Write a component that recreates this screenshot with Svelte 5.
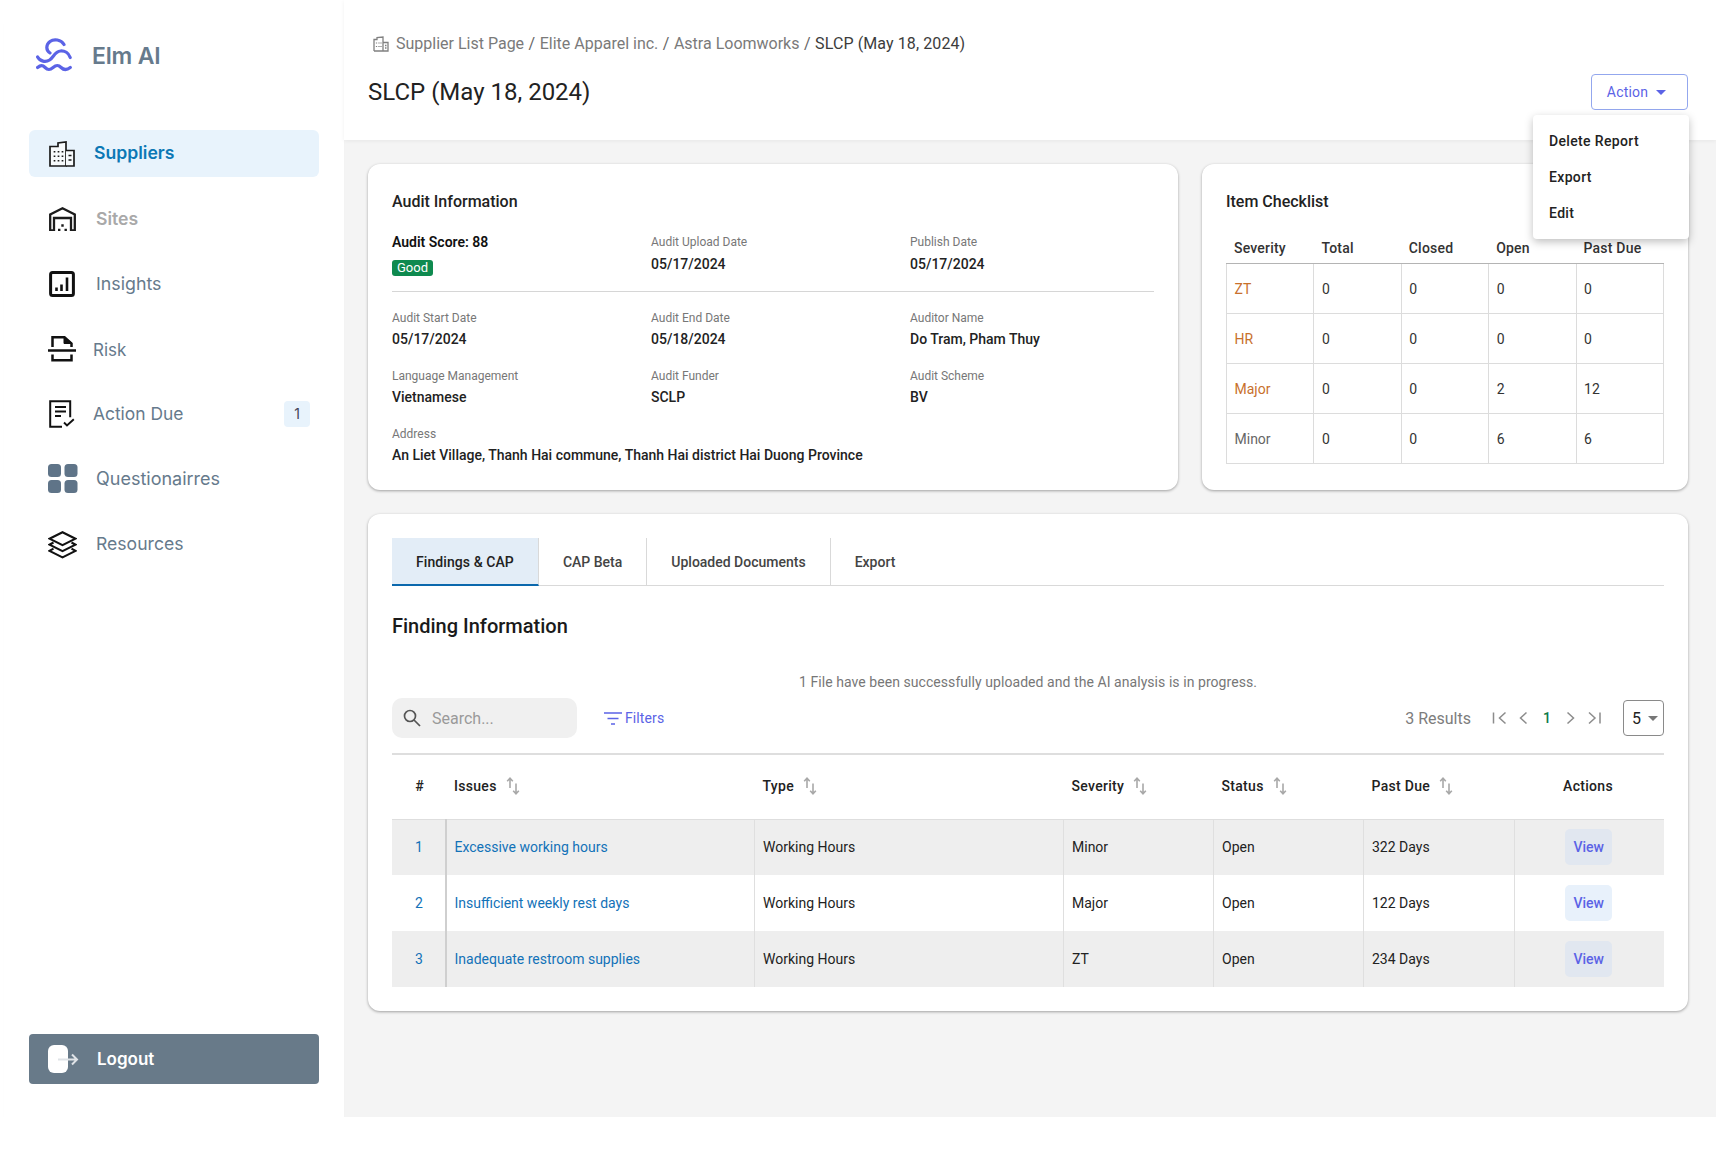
<script>
  const nav = [
    { key: 'suppliers', label: 'Suppliers', active: true },
    { key: 'sites', label: 'Sites', muted: true },
    { key: 'insights', label: 'Insights' },
    { key: 'risk', label: 'Risk' },
    { key: 'due', label: 'Action Due', badge: '1' },
    { key: 'quest', label: 'Questionairres' },
    { key: 'res', label: 'Resources' }
  ];
  const topInfo = [
    { l: 'Audit Upload Date', v: '05/17/2024' },
    { l: 'Publish Date', v: '05/17/2024' }
  ];
  const info = [
    { l: 'Audit Start Date', v: '05/17/2024' },
    { l: 'Audit End Date', v: '05/18/2024' },
    { l: 'Auditor Name', v: 'Do Tram, Pham Thuy' },
    { l: 'Language Management', v: 'Vietnamese' },
    { l: 'Audit Funder', v: 'SCLP' },
    { l: 'Audit Scheme', v: 'BV' }
  ];
  const check = [
    ['ZT', 0, 0, 0, 0, true],
    ['HR', 0, 0, 0, 0, true],
    ['Major', 0, 0, 2, 12, true],
    ['Minor', 0, 0, 6, 6, false]
  ];
  const tabs = ['Findings & CAP', 'CAP Beta', 'Uploaded Documents', 'Export'];
  const cols = ['Issues', 'Type', 'Severity', 'Status', 'Past Due'];
  const rows = [
    [1, 'Excessive working hours', 'Working Hours', 'Minor', 'Open', '322 Days'],
    [2, 'Insufficient weekly rest days', 'Working Hours', 'Major', 'Open', '122 Days'],
    [3, 'Inadequate restroom supplies', 'Working Hours', 'ZT', 'Open', '234 Days']
  ];
</script>

{#snippet navIcon(key)}
  {#if key === 'suppliers'}
    <svg width="26" height="26" viewBox="0 0 26 26" fill="none" stroke="#1b1b1b" stroke-width="1.7">
      <path d="M1 25V5.500h8V2l8-1v24H1Z" fill="#f7fafc"/>
      <path d="M17 9.500h8V25h-8" fill="#f7fafc"/>
      <path d="M5.500 10v1.500M9.500 10v1.500M13.500 10v1.500M5.500 14.500V16M9.500 14.500V16M13.500 14.500V16M5.500 19v1.500M9.500 19v1.500M13.500 19v1.500M19.500 14.500h3M19.500 19h3" stroke-width="1.7"/>
    </svg>
  {:else if key === 'sites'}
    <svg width="27" height="24" viewBox="0 0 27 24" fill="none" stroke="#1b1b1b" stroke-width="2.300">
      <path d="M1.200 23.500V7.500L13.500 1.300l12.300 6.200v16h-3.800V11H5V23.500H1.200Z"/>
      <path d="M9 22.800h2.400M15.500 22.800h2.400M12.300 18.500h2.400"/>
    </svg>
  {:else if key === 'insights'}
    <svg width="26" height="26" viewBox="0 0 26 26" fill="none" stroke="#111">
      <rect x="1.600" y="1.600" width="22.800" height="22.800" rx="2" stroke-width="3"/>
      <path d="M7.500 16.500v3.500M12.500 13.500V20M18 6.500V20" stroke-width="2.600"/>
    </svg>
  {:else if key === 'risk'}
    <svg width="30" height="27" viewBox="0 0 30 27" fill="none" stroke="#111" stroke-width="2.500">
      <path d="M5.500 12V2.200h12l7 6.300V12"/>
      <path d="M17 1.500 25 8.500h-8Z" fill="#111" stroke-width="1"/>
      <path d="M1 15.500h28"/>
      <path d="M5.500 19.500v5.700h19v-5.700"/>
    </svg>
  {:else if key === 'due'}
    <svg width="26" height="28" viewBox="0 0 26 28" fill="none" stroke="#111" stroke-width="2">
      <path d="M13 26.800H1.200V1.200h20v16"/>
      <path d="M6 7h11M6 11.500h11M6 16h6" stroke-width="2"/>
      <path d="M15 22.500l3 3 6.800-6.300" stroke-width="1.900"/>
    </svg>
  {:else if key === 'quest'}
    <svg width="30" height="29" viewBox="0 0 30 29" fill="#5f7488">
      <rect x="0" y="0" width="13" height="13" rx="3.500"/>
      <rect x="16.500" y="0" width="13" height="13" rx="3.500"/>
      <rect x="0" y="16" width="13" height="13" rx="3.500"/>
      <rect x="16.500" y="16" width="13" height="13" rx="3.500"/>
    </svg>
  {:else}
    <svg width="29" height="28" viewBox="0 0 29 28" fill="none" stroke="#111" stroke-width="2.100" stroke-linejoin="miter">
      <path d="M14.500 1.200 27.500 7.700 14.500 14.200 1.500 7.700 14.500 1.200Z"/>
      <path d="M5.500 11.500 1.500 13.700 14.500 20.200 27.500 13.700 23.500 11.500"/>
      <path d="M5.500 17.700 1.500 19.900 14.500 26.400 27.500 19.900 23.500 17.700"/>
    </svg>
  {/if}
{/snippet}

{#snippet sortIcon()}
  <svg class="sort" width="14" height="18" viewBox="0 0 14 18" fill="none" stroke="#a8a8a8" stroke-width="1.6">
    <path d="M4 11V1.500M1.200 4.200 4 1.200l2.800 3"/>
    <path d="M10 6.500V16.500M7.200 13.800 10 16.800l2.800-3"/>
  </svg>
{/snippet}

<div class="page">
  <aside class="sidebar">
    <div class="brand">
      <svg width="36" height="36" viewBox="0 0 36 36" fill="none" stroke="#5b63e6" stroke-width="3.200" stroke-linecap="round">
        <path d="M28 6.500C25 1.500 18 .5 14 3.500 9.500 7 10 12.500 14 15"/>
        <path d="M1.600 19c2.500 4.500 8 5.500 12 3 4.200-2.700 5-8.500 11-9 4-.3 8 2 9.600 6.500"/>
        <path d="M1.600 29.500c3-2.500 5-2.500 7.500 0 3 3 5 2.500 8 0s5-3 8 0 6 2.500 9.200 0"/>
      </svg>
      <span>Elm AI</span>
    </div>
    <nav class="nav">
      {#each nav as item}
        <div class="nav-item k-{item.key}" class:active={item.active} class:muted={item.muted}>
          <span class="nav-icon">{@render navIcon(item.key)}</span>
          <span class="nav-label">{item.label}</span>
          {#if item.badge}<span class="nav-badge">{item.badge}</span>{/if}
        </div>
      {/each}
    </nav>
    <button class="logout">
      <svg width="32" height="28" viewBox="0 0 32 28" fill="none">
        <rect x="0" y="0" width="20" height="28" rx="6" fill="#fff"/>
        <path d="M10 14.500h19M24 9.500l5 5-5 5" stroke="#dfe3e7" stroke-width="2"/>
      </svg>
      <span>Logout</span>
    </button>
  </aside>

  <main class="main">
    <header class="header">
      <div class="crumbs">
        <svg width="16" height="16" viewBox="0 0 16 16" fill="none" stroke="#808080" stroke-width="1.300">
          <path d="M1 15V3.500h3V1.500l6-.5v14M10 6.500h5V15H1"/>
          <path d="M3.500 6.500v1M6 6.500v1M8 6.500v1M3.500 10v1M6 10v1M8 10v1M12 9.500h1.500M12 12h1.500"/>
        </svg>
        <span>Supplier List Page</span><i>/</i><span>Elite Apparel inc.</span><i>/</i><span>Astra Loomworks</span><i>/</i><b>SLCP (May 18, 2024)</b>
      </div>
      <div class="title-row">
        <h1>SLCP (May 18, 2024)</h1>
        <button class="action">Action <em></em></button>
      </div>
      <div class="menu">
        <div>Delete Report</div>
        <div>Export</div>
        <div>Edit</div>
      </div>
    </header>

    <div class="content">
      <section class="top">
        <div class="card audit">
          <h2>Audit Information</h2>
          <div class="grid first">
            <div>
              <div class="score">Audit Score: 88</div>
              <span class="good">Good</span>
            </div>
            {#each topInfo as f}
              <div><div class="lab">{f.l}</div><div class="val">{f.v}</div></div>
            {/each}
          </div>
          <div class="grid second">
            {#each info as f}
              <div><div class="lab">{f.l}</div><div class="val">{f.v}</div></div>
            {/each}
            <div class="wide">
              <div class="lab">Address</div>
              <div class="val">An Liet Village, Thanh Hai commune, Thanh Hai district Hai Duong Province</div>
            </div>
          </div>
        </div>
        <div class="card checklist">
          <h2>Item Checklist</h2>
          <table>
            <thead><tr><th>Severity</th><th>Total</th><th>Closed</th><th>Open</th><th>Past Due</th></tr></thead>
            <tbody>
              {#each check as r}
                <tr>
                  <td class:orange={r[5]} class:grey={!r[5]}>{r[0]}</td>
                  <td>{r[1]}</td><td>{r[2]}</td><td>{r[3]}</td><td>{r[4]}</td>
                </tr>
              {/each}
            </tbody>
          </table>
        </div>
      </section>

      <section class="card findings">
        <div class="tabs">
          {#each tabs as t, i}
            <div class="tab" class:on={i === 0}>{t}</div>
          {/each}
        </div>
        <h3>Finding Information</h3>
        <p class="notice">1 File have been successfully uploaded and the AI analysis is in progress.</p>
        <div class="toolbar">
          <div class="search">
            <svg width="18" height="18" viewBox="0 0 18 18" fill="none" stroke="#555" stroke-width="1.700">
              <circle cx="7" cy="7" r="5.500"/><path d="M11 11l6 6"/>
            </svg>
            <span>Search...</span>
          </div>
          <div class="filters">
            <svg width="18" height="13" viewBox="0 0 18 13" fill="none" stroke="#5b63e6" stroke-width="1.600">
              <path d="M0 1h18M3.500 6.500h11M7 12h4"/>
            </svg>
            <span>Filters</span>
          </div>
          <div class="pager">
            <span class="results">3 Results</span>
            <svg width="110" height="16" viewBox="0 0 110 16" fill="none" stroke="#8c8c8c" stroke-width="1.500">
              <path d="M1.500 2.500v11M13.500 2.500 7.500 8l6 5.500"/>
              <path d="M34.500 2.500 28.500 8l6 5.500"/>
              <path d="M75.500 2.500 81.500 8l-6 5.500"/>
              <path d="M97 2.500 103 8l-6 5.500M108 2.500v11"/>
            </svg>
            <span class="pnum">1</span>
            <div class="select">5<em></em></div>
          </div>
        </div>
        <table class="ftable">
          <colgroup>
            <col class="w54"/><col class="w308"/><col class="w309"/><col class="w150"/><col class="w150"/><col class="w151"/><col class="w150"/>
          </colgroup>
          <thead>
            <tr>
              <th class="c">#</th>
              {#each cols as c}
                <th><span class="th">{c}{@render sortIcon()}</span></th>
              {/each}
              <th class="c">Actions</th>
            </tr>
          </thead>
          <tbody>
            {#each rows as r}
              <tr>
                <td class="c link">{r[0]}</td>
                <td class="link">{r[1]}</td>
                <td>{r[2]}</td><td>{r[3]}</td><td>{r[4]}</td><td>{r[5]}</td>
                <td class="c"><span class="view">View</span></td>
              </tr>
            {/each}
          </tbody>
        </table>
      </section>
    </div>
  </main>
</div>

<style>
  :global(body) { margin: 0; background: #fff; }
  .page {
    display: flex;
    width: 1712px;
    height: 1117px;
    margin-left: 4px;
    font-family: Roboto, sans-serif;
    color: #1c1c1c;
    background: #f4f4f4;
  }
  .sidebar {
    width: 340px;
    flex: none;
    box-sizing: border-box;
    background: #fff;
    box-shadow: 0 18px 6px -3px rgba(0, 0, 0, 0.035);
    padding: 37px 25px 33px;
    display: flex;
    flex-direction: column;
    font-family: Inter, sans-serif;
  }
  .brand { display: flex; align-items: center; gap: 20px; margin-left: 7px; height: 38px; }
  .brand span { font-size: 23px; font-weight: 600; color: #667a8c; letter-spacing: -0.2px; }
  .nav { display: flex; flex-direction: column; gap: 18px; margin-top: 55px; }
  .nav-item { height: 47px; display: flex; align-items: center; border-radius: 6px; font-size: 18px; color: #667a8c; }
  .nav-icon { width: 47px; margin-left: 20px; display: flex; align-items: center; flex: none; }
  .nav-label { flex: 1; }
  .active { background: #e8f3fc; color: #0b78b5; font-weight: 600; font-size: 17.6px; }
  .muted { color: #a9a9a9; font-weight: 600; font-size: 17.6px; }
  .k-suppliers .nav-label { margin-left: -2px; margin-top: -2px; }
  .k-insights .nav-label { font-size: 17.8px; }
  .k-risk .nav-icon { margin-left: 18px; width: 46px; }
  .k-risk .nav-label { font-size: 17px; margin-top: 2px; }
  .k-due .nav-icon { width: 44px; }
  .k-due .nav-label { font-size: 17.4px; }
  .k-quest .nav-icon { margin-left: 19px; width: 48px; }
  .k-res .nav-icon { margin-left: 19px; width: 48px; margin-top: 2px; }
  .k-res .nav-label { font-size: 17.6px; }
  .nav-badge {
    width: 26px; height: 26px; margin-right: 9px; border-radius: 4px; background: #e8f3fc;
    display: flex; align-items: center; justify-content: center; font-size: 14px; color: #445;
  }
  .logout {
    margin-top: auto; height: 50px; border: 0; border-radius: 4px; background: #687a89; color: #fff;
    display: flex; align-items: center; gap: 17px; padding: 0 19px; font: 600 17px Inter, sans-serif;
  }

  .main { flex: 1; min-width: 0; display: flex; flex-direction: column; }
  .header {
    position: relative; height: 140px; box-sizing: border-box; flex: none; background: #fff;
    padding: 34px 24px 0; box-shadow: 0 1px 4px rgba(0, 0, 0, 0.06);
  }
  .crumbs { display: flex; align-items: center; height: 19px; margin-left: 5px; font-size: 16px; color: #7a7a7a; }
  .crumbs svg { margin-right: 7px; }
  .crumbs i { font-style: normal; margin: 0 4.500px; color: #666; }
  .crumbs b { font-weight: 400; color: #3c3c3c; letter-spacing: 0.1px; }
  .title-row { display: flex; justify-content: space-between; align-items: center; margin-top: 21px; height: 36px; padding-right: 4px; }
  h1 { margin: 0; font-size: 24px; font-weight: 400; color: #222; }
  .action {
    width: 97px; height: 36px; padding: 0 6px 0 0; background: #fff; border: 1px solid #93a7ee; border-radius: 4px;
    font: 400 14px Roboto, sans-serif; letter-spacing: 0.2px; color: #5b63e6; display: flex; align-items: center; justify-content: center; gap: 8px;
  }
  .action em, .select em { width: 0; height: 0; border: 5px solid transparent; border-top-color: currentColor; border-bottom: 0; }
  .menu {
    position: absolute; top: 115px; left: 1189px; width: 156px; padding: 8px 0; box-sizing: border-box; background: #fff; border-radius: 4px;
    box-shadow: 0 3px 8px rgba(0, 0, 0, 0.25); z-index: 5; font-size: 14px; font-weight: 500; letter-spacing: 0.35px; color: #222;
  }
  .menu div { height: 36px; padding-left: 16px; display: flex; align-items: center; }

  .content { padding: 24px 28px 0 24px; display: flex; flex-direction: column; gap: 24px; }
  .top { display: flex; gap: 24px; }
  .card { background: #fff; border-radius: 12px; box-shadow: 0 1px 3px rgba(0, 0, 0, 0.35); box-sizing: border-box; padding: 24px; }
  .audit { width: 810px; height: 326px; }
  .checklist { width: 486px; height: 326px; }
  h2 { margin: 4px 0 0; font-size: 16px; font-weight: 500; line-height: 20px; color: #222; }
  .grid { display: grid; grid-template-columns: 259px 259px 1fr; }
  .first { margin-top: 22px; height: 57px; border-bottom: 1px solid #d6d6d6; }
  .second { margin-top: 18px; row-gap: 21px; }
  .second .val { margin-top: 5px; }
  .wide { grid-column: 1 / -1; }
  .score { font-size: 14px; font-weight: 600; line-height: 16px; color: #111; }
  .good { display: inline-block; margin-top: 10px; padding: 0 5px; height: 16px; line-height: 16px; border-radius: 3px; background: #0e8a4f; color: #fff; font-size: 13px; }
  .lab { font-size: 12px; line-height: 16px; color: #777; }
  .val { font-size: 14px; font-weight: 500; line-height: 16px; margin-top: 6px; color: #222; }

  .checklist table { width: 438px; margin-top: 21px; border-collapse: collapse; table-layout: fixed; font-size: 14px; }
  .checklist th { height: 30px; padding: 0 7.500px; text-align: left; font-weight: 500; letter-spacing: 0.2px; color: #333; border-bottom: 1px solid #b4b4b4; }
  .checklist td { height: 50px; box-sizing: border-box; padding: 0 7.500px; border: 1px solid #dcdcdc; color: #333; }
  .orange { color: #c8702c !important; }
  .grey { color: #666 !important; }

  .findings { height: 497px; }
  .tabs { display: flex; height: 47px; border-bottom: 1px solid #d9d9d9; box-sizing: content-box; }
  .tab { height: 47px; padding: 0 24px; display: flex; align-items: center; font-size: 14px; font-weight: 500; color: #444; border-right: 1px solid #d9d9d9; }
  .tab:last-child { border-right: 0; }
  .tab.on { background: #e3edf7; color: #222; border-bottom: 2px solid #0b68ad; box-sizing: border-box; height: 48px; padding-top: 2px; letter-spacing: 0.08px; }
  h3 { margin: 27px 0 0; font-size: 20px; font-weight: 500; line-height: 26px; color: #1a1a1a; }
  .notice { margin: 34px 0 0; text-align: center; font-size: 14px; letter-spacing: 0.06px; line-height: 18px; color: #777; }
  .toolbar { display: flex; align-items: center; margin-top: 7px; height: 40px; }
  .search {
    width: 185px; height: 40px; box-sizing: border-box; background: #f0f0f0; border-radius: 10px; display: flex; align-items: center;
    padding-left: 11px; gap: 11px; font-size: 16px; color: #9a9a9a;
  }
  .filters { display: flex; align-items: center; gap: 3px; margin-left: 27px; font-size: 14px; letter-spacing: 0.1px; color: #5b63e6; }
  .pager { position: relative; margin-left: auto; display: flex; align-items: center; }
  .results { font-size: 16px; color: #7d7d7d; margin-right: 21px; }
  .pnum { position: absolute; right: 113px; font-size: 14px; font-weight: 500; color: #0e7a48; }
  .select {
    width: 41px; height: 36px; box-sizing: border-box; margin-left: 21px; border: 1px solid #8a8a8a; border-radius: 4px; font-size: 16px;
    display: flex; align-items: center; padding-left: 8px; gap: 7px; color: #222;
  }
  .select em { color: #777; }

  .ftable { width: 1272px; margin-top: 15px; border-collapse: collapse; table-layout: fixed; font-size: 14px; border-top: 2px solid #dedede; }
  .w54 { width: 54px; } .w308 { width: 308px; } .w309 { width: 309px; } .w150 { width: 150px; } .w151 { width: 151px; }
  .ftable th { height: 65px; padding: 0 8.500px 2px; text-align: left; font-weight: 500; letter-spacing: 0.3px; color: #222; border-bottom: 1px solid #dedede; box-sizing: border-box; }
  .ftable th:nth-child(2) { padding-left: 8px; }
  .th { display: inline-flex; align-items: center; gap: 9px; }
  .sort { margin-top: 1px; }
  .ftable td { height: 56px; box-sizing: border-box; padding: 0 8.500px; color: #222; border-right: 1px solid #dfdfdf; }
  .ftable td:last-child { border-right: 0; }
  .ftable tbody tr:nth-child(odd) { background: #eeeeee; }
  .ftable th.c { text-align: center; padding: 0 2px 2px 0; }
  .ftable td.c { text-align: center; padding: 0 1px 0 0; }
  .ftable th.c:first-child { padding: 0 0 2px 1px; }
  .ftable td.c:first-child { padding: 0 0 0 1px; }
  .ftable td.link:nth-child(2) { padding-left: 7.500px; }
  .ftable .link { color: #1272b8; }
  .ftable tbody td:first-child { border-right: 2px solid #cfcfcf; }
  .view {
    display: inline-flex; width: 47px; height: 36px; align-items: center; justify-content: center; border-radius: 5px;
    background: #e8f1fb; color: #5b63e6; font-weight: 500;
  }
  .ftable tbody tr:nth-child(odd) .view { background: #e1e7f0; }
</style>
